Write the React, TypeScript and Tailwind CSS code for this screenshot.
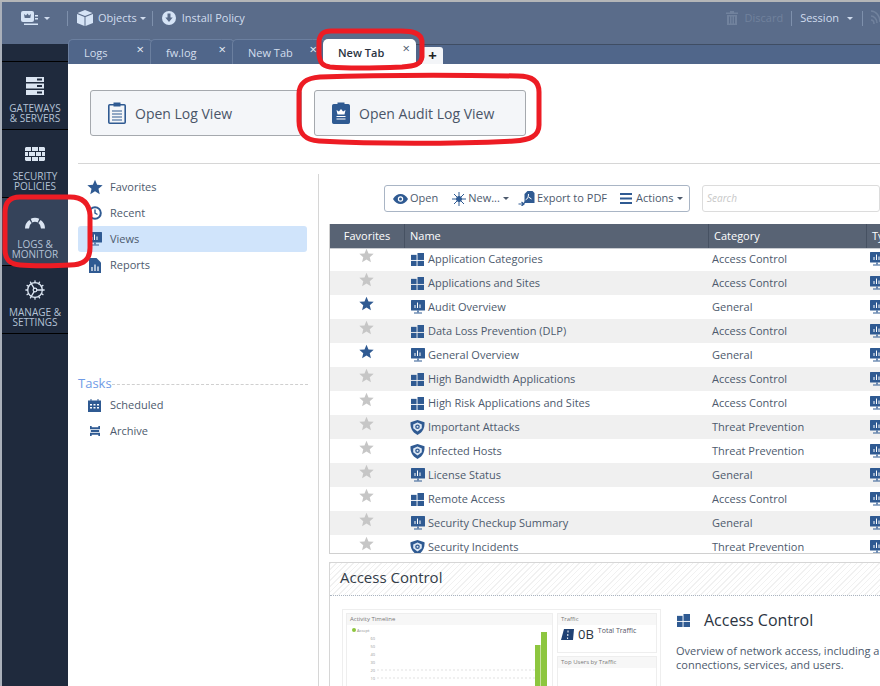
import type { ReactNode } from 'react'
import { Cog } from 'lucide-react'

const BLUE = '#2f5a92'

function Star({ on, size = 15 }: { on?: boolean; size?: number }) {
  return (
    <svg width={size} height={size} viewBox="0 0 24 24" fill={on ? BLUE : '#c6c6c6'}>
      <path d="M12 1l3.2 7.6 8.3.7-6.3 5.4 1.9 8.1L12 18.5l-7.1 4.3 1.9-8.1L.5 9.3l8.3-.7z" />
    </svg>
  )
}

function Monitor({ size = 14 }: { size?: number }) {
  return (
    <svg width={size} height={size} viewBox="0 0 14 14">
      <rect x="0" y="0" width="14" height="10.5" rx="0.5" fill={BLUE} />
      <path d="M4 8V5M6.5 8V2.5M9 8V4.5" stroke="#fff" strokeWidth="1" />
      <path d="M6.3 10.5h1.4v1.7H6.3zM3 12.4h8v1.2H3z" fill={BLUE} />
    </svg>
  )
}

function Blocks() {
  return (
    <svg width="13" height="13" viewBox="0 0 14 14" fill={BLUE}>
      <rect x="0" y="2" width="6" height="5.5" />
      <rect x="7" y="0" width="7" height="7.5" />
      <rect x="0" y="8.5" width="6" height="5.5" />
      <rect x="7" y="8.5" width="7" height="5.5" />
    </svg>
  )
}

function Shield() {
  return (
    <svg width="15" height="15" viewBox="0 0 15 15">
      <path d="M7.5 0l7 2.300c.4 5.700-1.800 10-7 12.700C2.300 12.300.100 8 .500 2.300z" fill={BLUE} />
      <path d="M7.500 2.600l4.300 1.800v3.800L7.500 11.400 3.200 8.200V4.400z" fill="#dce7f4" />
      <circle cx="7.500" cy="6.800" r="2.300" fill={BLUE} />
      <circle cx="7.500" cy="6.800" r="1" fill="#dce7f4" />
    </svg>
  )
}

function Clipboard({ audit }: { audit?: boolean }) {
  return (
    <svg width="18" height="22" viewBox="0 0 18 22">
      <rect x="0.8" y="2.8" width="16.4" height="18.4" rx="1" fill={audit ? BLUE : '#f4f6f9'} stroke={BLUE} strokeWidth="1.6" />
      <rect x="5.5" y="0.5" width="7" height="4" fill={BLUE} />
      {audit ? (
        <>
          <path d="M4.5 8l2.4 1.6L9 7l2.1 2.6L13.500 8l-1 4.500h-7z" fill="#fff" />
          <path d="M4.500 14.500h9M4.500 17h9" stroke="#fff" strokeWidth="1.200" />
        </>
      ) : (
        <path d="M4 9h10M4 12h10M4 15h10M4 18h10" stroke={BLUE} strokeWidth="1.200" />
      )}
    </svg>
  )
}

function NavIcon({ name }: { name: string }) {
  if (name === 'gateways') {
    return (
      <svg width="18" height="18" viewBox="0 0 18 18" fill="#dbe5f2">
        <path d="M0 0h18v5H0zM0 6.500h18v5H0zM0 13h18v5H0z" />
        <path d="M11 1.500h5v2h-5zM11 8h5v2h-5zM11 14.500h5v2h-5z" fill="#1f2a3d" />
      </svg>
    )
  }
  if (name === 'security') {
    return (
      <svg width="20" height="14" viewBox="0 0 20 14" fill="#dbe5f2">
        <path d="M1 0h5v4H0V1zM7 0h6v4H7zM14 0h5l1 1v3h-6zM0 5h3v4H0zM4 5h6v4H4zM11 5h5v4h-5zM17 5h3v4h-3zM0 10h6v4H1l-1-1zM7 10h6v4H7zM14 10h6v3l-1 1h-5z" />
      </svg>
    )
  }
  if (name === 'logs') {
    return (
      <svg width="22" height="14" viewBox="0 0 22 14" fill="none" strokeWidth="4">
        <path d="M3 13.500A8.500 8.500 0 0 1 6.500 6.500" stroke="#dbe5f2" />
        <path d="M7.500 5.600a8.500 8.500 0 0 1 7 0" stroke="#dbe5f2" />
        <path d="M15.500 6.500A8.500 8.500 0 0 1 19 13.500" stroke="#dbe5f2" />
      </svg>
    )
  }
  return <Cog size={22} strokeWidth={1.4} color="#dbe5f2" />
}

function TreeIcon({ name }: { name: string }) {
  if (name === 'Favorites') return <Star on size={16} />
  if (name === 'Recent') {
    return (
      <svg width="14" height="14" viewBox="0 0 14 14" fill="none" stroke={BLUE} strokeWidth="2">
        <circle cx="7" cy="7" r="5.800" />
        <path d="M7 3.500V7l2.500 1.500" strokeWidth="1.400" />
      </svg>
    )
  }
  if (name === 'Views') return <Monitor />
  if (name === 'Reports') {
    return (
      <svg width="12" height="15" viewBox="0 0 12 15">
        <path d="M0 0h7.500L12 4.500V15H0z" fill={BLUE} />
        <path d="M3 13V9M6 13V6.500M9 13V8.500" stroke="#fff" strokeWidth="1.200" />
      </svg>
    )
  }
  if (name === 'Scheduled') {
    return (
      <svg width="13" height="13" viewBox="0 0 13 13" fill={BLUE}>
        <path d="M0 1.500h2.500V0h1v1.500h6V0h1v1.500H13V13H0z" />
        <path d="M2 5h2v1.500H2zM5.500 5h2v1.500h-2zM9 5h2v1.500H9zM2 8h2v1.500H2zM5.500 8h2v1.500h-2zM9 8h2v1.500H9z" fill="#fff" />
      </svg>
    )
  }
  return (
    <svg width="10" height="12" viewBox="0 0 12 12" fill={BLUE}>
      <path d="M0 0h2v1.500h8V0h2v4H0zM1 4.800h10v2.400H1zM0 8h12v4h-2v-1.500H2V12H0z" />
    </svg>
  )
}

function Caret() {
  return <span className="ml-[3px] inline-block border-x-[3px] border-t-[3px] border-x-transparent border-t-current" />
}

function ToolSep() {
  return <span className="h-[15px] w-px bg-[#7e90ac]" />
}

function Tab({ label, width }: { label: string; width: string }) {
  return (
    <div className={`relative flex h-full items-center rounded-tl-[5px] border-t border-l border-[#6b7f9f] bg-[#50668a] pt-[2px] pl-[15px] text-[11px] text-[#d3deed] ${width}`}>
      <span className="absolute top-[-1px] right-[-5px] h-[25px] w-[12px] skew-x-[16deg] rounded-tr-[4px] border-t border-r border-[#6b7f9f] bg-[#50668a]" />
      <span className="relative">{label}</span>
      <span className="absolute top-[3px] right-[6px] z-10 text-[13px] leading-[13px] text-[#e6edf6]">×</span>
    </div>
  )
}

function OpenButton({ label, audit, width }: { label: string; audit?: boolean; width: string }) {
  return (
    <div className={`flex h-[46px] items-center gap-[9px] rounded-[3px] border border-[#a5a9ae] bg-[#f4f6f9] pl-[17px] text-[14px] text-[#4a5568] ${width}`}>
      <Clipboard audit={audit} />
      <span>{label}</span>
    </div>
  )
}

function TreeItem({ label, active }: { label: string; active?: boolean }) {
  return (
    <div className={`flex h-[26px] w-[229px] items-center rounded-[3px] text-[11px] text-[#4d5a6d] ${active ? 'bg-[#d0e4fb]' : ''}`}>
      <span className="flex w-[32px] justify-center pl-[1px]">
        <TreeIcon name={label} />
      </span>
      <span>{label}</span>
    </div>
  )
}

function ToolButton({ icon, children, className }: { icon: ReactNode; children: ReactNode; className: string }) {
  return (
    <span className={`flex items-center gap-[2px] ${className}`}>
      {icon}
      <span className="flex items-center">{children}</span>
    </span>
  )
}

const ROWS: { name: string; category: string; icon: 'blocks' | 'monitor' | 'shield'; on?: boolean }[] = [
  { name: 'Application Categories', category: 'Access Control', icon: 'blocks' },
  { name: 'Applications and Sites', category: 'Access Control', icon: 'blocks' },
  { name: 'Audit Overview', category: 'General', icon: 'monitor', on: true },
  { name: 'Data Loss Prevention (DLP)', category: 'Access Control', icon: 'blocks' },
  { name: 'General Overview', category: 'General', icon: 'monitor', on: true },
  { name: 'High Bandwidth Applications', category: 'Access Control', icon: 'blocks' },
  { name: 'High Risk Applications and Sites', category: 'Access Control', icon: 'blocks' },
  { name: 'Important Attacks', category: 'Threat Prevention', icon: 'shield' },
  { name: 'Infected Hosts', category: 'Threat Prevention', icon: 'shield' },
  { name: 'License Status', category: 'General', icon: 'monitor' },
  { name: 'Remote Access', category: 'Access Control', icon: 'blocks' },
  { name: 'Security Checkup Summary', category: 'General', icon: 'monitor' },
  { name: 'Security Incidents', category: 'Threat Prevention', icon: 'shield' },
]

const NAV = [
  { id: 'gateways', lines: ['GATEWAYS', '& SERVERS'] },
  { id: 'security', lines: ['SECURITY', 'POLICIES'] },
  { id: 'logs', lines: ['LOGS &', 'MONITOR'], active: true },
  { id: 'manage', lines: ['MANAGE &', 'SETTINGS'] },
]

export default function App() {
  return (
    <div className="relative flex h-[686px] w-[880px] flex-col overflow-hidden bg-white font-['Open_Sans',sans-serif]">
      <div className="h-[2px] shrink-0 bg-[#b4b6b8]" />
      <div className="flex min-h-0 flex-1">
        <div className="w-[2px] shrink-0 bg-[#aab0ba]" />
        <div className="flex min-w-0 flex-1 flex-col">
          {/* top toolbar */}
          <div className="flex h-[37px] shrink-0 items-center bg-[#5a6c8a] pb-[5px] text-[11px] text-[#d0dcee]">
            <svg className="ml-[19px]" width="17" height="15" viewBox="0 0 17 15" fill="#d6e4f6">
              <rect x="0" y="0" width="13" height="11" rx="2" />
              <path d="M3 3l2 1.500L6.500 2.500 8 4.500 10 3 9.300 7H3.700z" fill="#5a6c8a" />
              <path d="M14 4h3v1.500h-3zM14 7h3v1.500h-3zM3 12.500h14V14H3z" />
            </svg>
            <span className="ml-[3px] mr-[17px] flex"><Caret /></span>
            <ToolSep />
            <svg className="ml-[9px] mr-[5px]" width="16" height="16" viewBox="0 0 16 16" fill="#d6e4f6">
              <path d="M8 0l7.500 3L8 6 .5 3zM0 4l7.500 3v9L0 13zM16 4L8.500 7v9l7.500-3z" />
            </svg>
            <span>Objects</span>
            <Caret />
            <span className="ml-[6px] flex"><ToolSep /></span>
            <svg className="ml-[9px] mr-[6px]" width="14" height="14" viewBox="0 0 14 14">
              <circle cx="7" cy="7" r="7" fill="#d6e4f6" />
              <path d="M5.500 2.500h3v4h2.200L7 11 3.300 6.500h2.200z" fill="#5a6c8a" />
            </svg>
            <span>Install Policy</span>
            <div className="ml-auto flex items-center">
              <svg width="12" height="14" viewBox="0 0 12 14" fill="#71829d">
                <path d="M4 0h4v1.500h4V3H0V1.500h4zM1 4h10v10H1z" />
                <path d="M3.500 5.500v7M6 5.500v7M8.500 5.500v7" stroke="#5a6c8a" />
              </svg>
              <span className="ml-[7px] mr-[8px] text-[#71829d]">Discard</span>
              <ToolSep />
              <span className="ml-[8px]">Session</span>
              <span className="ml-[5px] mr-[9px] flex"><Caret /></span>
              <ToolSep />
              <svg className="ml-[8px]" width="9" height="16" viewBox="0 0 9 16" fill="none" stroke="#71829d" strokeWidth="1.500">
                <path d="M0 1c5 0 9 5 9 11M0 6c3 0 6 3 6 7M0 10c2 0 3 2 3 4" />
              </svg>
            </div>
          </div>

          <div className="flex min-h-0 flex-1">
            {/* left nav */}
            <div className="flex w-[66px] shrink-0 flex-col">
              <div className="h-[5px] bg-[#5a6c8a]" />
              <div className="flex flex-1 flex-col bg-[#1f2a3d]">
                <div className="h-[18px] border-b border-black" />
                {NAV.map((n) => (
                  <div
                    key={n.id}
                    className={`flex h-[68px] flex-col items-center border-b border-black pt-[13px] text-center text-[10px] leading-[10px] text-[#b4c2d6] ${n.active ? 'bg-[#35435a]' : ''}`}
                  >
                    <div className="flex h-[22px] items-center">
                      <NavIcon name={n.id} />
                    </div>
                    <div className="mt-[6px]">
                      <div>{n.lines[0]}</div>
                      <div>{n.lines[1]}</div>
                    </div>
                  </div>
                ))}
              </div>
            </div>

            <div className="flex min-w-0 flex-1 flex-col">
              {/* tab strip */}
              <div className="flex h-[25px] shrink-0 items-end bg-[linear-gradient(#5a6c8a_5px,#3f4d63_5px,#3f4d63_6px,#50668a_6px)]">
                <Tab label="Logs" width="w-[82px]" />
                <Tab label="fw.log" width="w-[82px]" />
                <Tab label="New Tab" width="w-[91px]" />
                <div className="relative z-10 flex h-full w-[93px] items-center rounded-t-[5px] bg-white pt-[3px] pl-[15px] text-[11px] font-semibold text-[#2b3442]">
                  New Tab
                  <span className="absolute top-[3px] right-[6px] text-[13px] font-normal leading-[13px] text-[#4d5a6d]">×</span>
                </div>
                <div className="ml-[6px] flex h-[17px] w-[21px] items-center justify-center rounded-t-[3px] bg-[#f3f5f8] text-[15px] font-bold leading-none text-[#222]">
                  +
                </div>
              </div>

              {/* open log buttons */}
              <div className="flex h-[99px] shrink-0 gap-[12px] pt-[26px] pl-[22px]">
                <OpenButton label="Open Log View" width="w-[212px]" />
                <OpenButton label="Open Audit Log View" audit width="w-[212px]" />
              </div>

              <div className="flex min-h-0 flex-1 flex-col pl-[10px]">
                <div className="h-px shrink-0 bg-[#d6d6d6]" />
                <div className="flex min-h-0 flex-1 pt-[10px]">
                  {/* tree */}
                  <div className="w-[241px] shrink-0 border-r border-[#d6d6d6]">
                    <TreeItem label="Favorites" />
                    <TreeItem label="Recent" />
                    <TreeItem label="Views" active />
                    <TreeItem label="Reports" />
                    <div className="mt-[96px] flex h-[20px] w-[230px] items-center">
                      <span className="text-[13px] text-[#6f9be6]">Tasks</span>
                      <span className="flex-1 border-t border-dashed border-[#cfcfcf]" />
                    </div>
                    <div className="mt-[-2px]">
                      <TreeItem label="Scheduled" />
                      <TreeItem label="Archive" />
                    </div>
                  </div>

                  {/* views list */}
                  <div className="flex min-w-0 flex-1 flex-col pt-[11px] pl-[10px]">
                    <div className="flex h-[27px] shrink-0 gap-[12px] pl-[55px]">
                      <div className="flex w-[306px] shrink-0 items-center rounded-[3px] border border-[#a9b5c5] pl-[8px] text-[11px] text-[#4d5a6d]">
                        <ToolButton
                          className=""
                          icon={
                            <svg width="15" height="10" viewBox="0 0 15 10">
                              <path d="M0 5c2-3.300 4.500-5 7.500-5S13 1.700 15 5c-2 3.300-4.500 5-7.500 5S2 8.300 0 5z" fill={BLUE} />
                              <circle cx="7.500" cy="5" r="2.700" fill="#fff" />
                              <circle cx="7.500" cy="5" r="1.500" fill={BLUE} />
                            </svg>
                          }
                        >
                          Open
                        </ToolButton>
                        <ToolButton
                          className="ml-[14px]"
                          icon={
                            <svg width="14" height="14" viewBox="0 0 14 14" stroke={BLUE} strokeWidth="1">
                              <circle cx="7" cy="7" r="2.500" fill={BLUE} />
                              <path d="M7 0v14M0 7h14M2 2l10 10M12 2L2 12" />
                            </svg>
                          }
                        >
                          <span>New...</span>
                          <Caret />
                        </ToolButton>
                        <ToolButton
                          className="ml-[9px]"
                          icon={
                            <svg width="17" height="15" viewBox="0 0 16 15">
                              <path d="M9 0h5l2 2v10H6V3z" fill={BLUE} />
                              <path d="M10 3c0 3-1 5-3 6M10 6l3 2" stroke="#fff" fill="none" />
                              <path d="M0 13h5M3 11l2.500 2L3 15M5 13l3-4" stroke={BLUE} strokeWidth="1.200" fill="none" />
                            </svg>
                          }
                        >
                          Export to PDF
                        </ToolButton>
                        <ToolButton
                          className="ml-[13px]"
                          icon={
                            <svg className="mr-[2px]" width="12" height="11" viewBox="0 0 12 11" fill={BLUE}>
                              <path d="M0 0h12v2H0zM0 4.500h12v2H0zM0 9h12v2H0z" />
                            </svg>
                          }
                        >
                          <span>Actions</span>
                          <Caret />
                        </ToolButton>
                      </div>
                      <div className="flex flex-1 items-center rounded-[3px] border border-[#dcdcdc] pl-[4px] text-[10px] italic text-[#c8c8c8]">
                        Search
                      </div>
                    </div>

                    <div className="mt-[12px] flex h-[330px] shrink-0 flex-col overflow-hidden border-b border-l border-[#d0d0d0]">
                      <div className="relative z-10 flex h-[25px] shrink-0 items-center border-b border-[#c9ccd1] bg-[#586374] text-[11px] text-white">
                        <div className="flex h-full w-[75px] shrink-0 items-center justify-center border-r border-[#465162]">Favorites</div>
                        <div className="flex h-full w-[304px] shrink-0 items-center border-r border-[#465162] pl-[5px]">Name</div>
                        <div className="flex h-full w-[158px] shrink-0 items-center border-r border-[#465162] pl-[5px]">Category</div>
                        <div className="shrink-0 pl-[5px]">Type</div>
                      </div>
                      <div className="mt-[-2px]">
                        {ROWS.map((r, i) => (
                          <div key={r.name} className={`flex h-[24px] items-center text-[11px] text-[#4d5a6d] ${i % 2 === 1 ? 'bg-[#f0f0f0]' : 'bg-white'}`}>
                            <div className="flex w-[72px] shrink-0 justify-center pb-[8px]">
                              <Star on={r.on} />
                            </div>
                            <div className="flex w-[310px] shrink-0 items-center">
                              <span className="flex w-[25px] shrink-0 justify-center pl-[6px]">
                                {r.icon === 'blocks' ? <Blocks /> : r.icon === 'monitor' ? <Monitor /> : <Shield />}
                              </span>
                              <span className="pl-[1px]">{r.name}</span>
                            </div>
                            <div className="w-[158px] shrink-0">{r.category}</div>
                            <div className="shrink-0"><Monitor /></div>
                          </div>
                        ))}
                      </div>
                    </div>

                    {/* preview box */}
                    <div className="mt-[8px] flex min-h-0 flex-1 flex-col border-t border-l border-[#d6d6d6]">
                      <div className="flex h-[33px] shrink-0 items-center border-b border-dotted border-[#aab4c0] bg-[repeating-linear-gradient(135deg,#f1f1f1_0,#f1f1f1_1px,#ffffff_1px,#ffffff_4px)] pb-[3px] pl-[10px] text-[15px] text-[#333c48]">
                        Access Control
                      </div>
                      <div className="flex pt-[13px] pl-[12px]">
                        <div className="grid h-[90px] w-[319px] shrink-0 grid-cols-[207px_1fr] gap-[4px] border border-[#eeeeee] p-[3px] text-[6px] leading-[11px] text-[#777]">
                          <div className="border border-[#eeeeee]">
                            <div className="h-[11px] bg-[#f7f7f7] px-[3px]">Activity Timeline</div>
                            <svg width="205" height="62" viewBox="0 0 205 62">
                              <circle cx="7" cy="5" r="2" fill="#8dc63f" />
                              <text x="10" y="6.500" fontSize="4" fill="#888">Accept</text>
                              <g fontSize="4" fill="#999" textAnchor="end">
                                <text x="28" y="14.500">60</text>
                                <text x="28" y="22.500">50</text>
                                <text x="28" y="30.500">40</text>
                                <text x="28" y="38.500">30</text>
                                <text x="28" y="46.500">20</text>
                                <text x="28" y="54.500">10</text>
                              </g>
                              <path d="M30 45H200M30 53H200" stroke="#ccc" strokeWidth="0.600" strokeDasharray="2 2" />
                              <rect x="188" y="20" width="5.500" height="42" fill="#8dc63f" />
                              <rect x="194" y="7" width="6" height="55" fill="#8dc63f" />
                            </svg>
                          </div>
                          <div className="flex flex-col gap-[3px]">
                            <div className="h-[40px] border border-[#eeeeee]">
                              <div className="h-[11px] bg-[#f7f7f7] px-[3px]">Traffic</div>
                              <div className="flex items-start px-[3px]">
                                <svg className="mt-[3px] mr-[4px]" width="13" height="13" viewBox="0 0 13 11">
                                  <path d="M3 0h10l-1 11H0z" fill="#1f4173" />
                                  <path d="M7 1.500v2M6.800 5v2M6.600 8.500v1.500" stroke="#fff" strokeWidth="1" />
                                </svg>
                                <span className="text-[13px] leading-[18px] text-[#2b3442]">0B</span>
                                <span className="ml-[4px] text-[7px] leading-[12px] text-[#556]">Total Traffic</span>
                              </div>
                            </div>
                            <div className="flex-1 border border-[#eeeeee]">
                              <div className="h-[11px] bg-[#f7f7f7] px-[3px]">Top Users by Traffic</div>
                            </div>
                          </div>
                        </div>
                        <div className="pl-[15px] whitespace-nowrap">
                          <div className="flex h-[22px] items-center pl-[1px]">
                            <Blocks />
                            <span className="ml-[14px] text-[16px] text-[#2b3442]">Access Control</span>
                          </div>
                          <div className="mt-[13px] text-[11px] leading-[14px] text-[#4d5a6d]">
                            <div>Overview of network access, including a</div>
                            <div>connections, services, and users.</div>
                          </div>
                        </div>
                      </div>
                    </div>
                  </div>
                </div>
              </div>
            </div>
          </div>
        </div>
      </div>

      {/* red annotation marks */}
      <svg className="pointer-events-none absolute inset-0 z-20" width="880" height="686" fill="none" stroke="#ed1c24" strokeWidth="5">
        <path d="M331 31h70c12 0 20 2 21 10v16c-1 8-8 9-20 10-25 1-60 1-72 0-8-1-10-5-11-12V41c1-7 4-10 12-10z" />
        <path d="M320 77c60-2 130-2 198-1 12 0 21 4 21 16v33c0 11-9 15-25 16-60 3-140 3-195 0-14-1-20-7-20-20v-27c0-12 8-16 21-17z" />
        <path d="M20 197h50c12 0 19 6 20 18v33c0 12-7 17-20 17-15 1-40 1-50 0-11-1-15-6-15-16v-36c0-10 4-16 15-16z" />
      </svg>
    </div>
  )
}
